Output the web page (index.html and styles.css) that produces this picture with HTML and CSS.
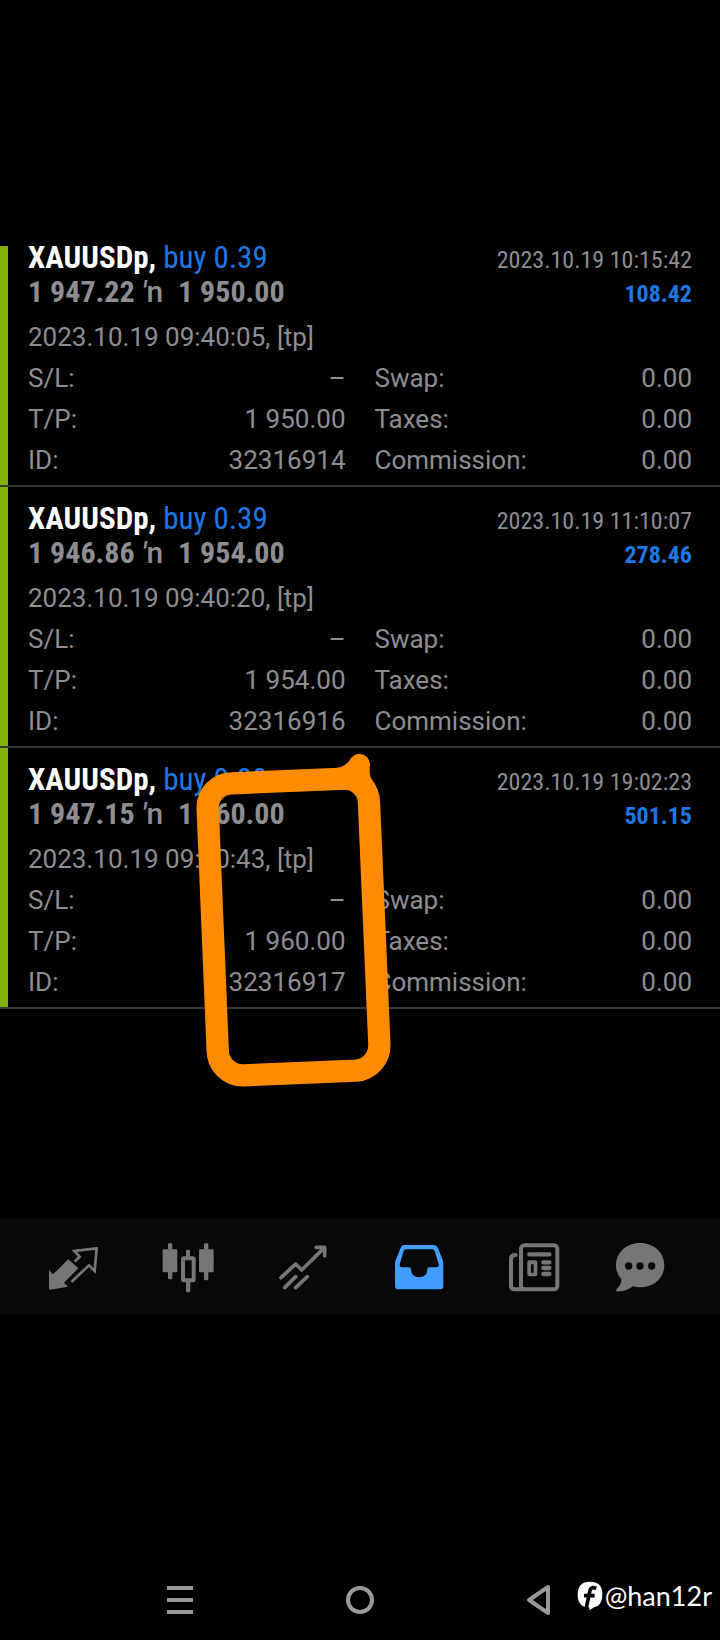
FILE: index.html
```html
<!DOCTYPE html>
<html lang="en">
<head>
    <meta charset="UTF-8">
    <meta name="viewport" content="width=device-width, initial-scale=1">
    <title>History</title>
    <link rel="stylesheet" href="styles.css">
</head>
<body>

<main class="history">
    <article class="deal">
        <div class="row title">
            <h2><b>XAUUSDp,</b> <span class="buy">buy 0.39</span></h2>
            <time>2023.10.19 10:15:42</time>
        </div>
        <div class="row price">
            <p>1 947.22 <span class="to"><i>′</i>n</span> 1 950.00</p>
            <strong class="profit">108.42</strong>
        </div>
        <p class="opened">2023.10.19 09:40:05, [tp]</p>
        <dl class="details">
            <div><dt>S/L:</dt><dd>–</dd></div>
            <div><dt>Swap:</dt><dd>0.00</dd></div>
            <div><dt>T/P:</dt><dd>1 950.00</dd></div>
            <div><dt>Taxes:</dt><dd>0.00</dd></div>
            <div><dt>ID:</dt><dd>32316914</dd></div>
            <div><dt>Commission:</dt><dd>0.00</dd></div>
        </dl>
    </article>
    <article class="deal">
        <div class="row title">
            <h2><b>XAUUSDp,</b> <span class="buy">buy 0.39</span></h2>
            <time>2023.10.19 11:10:07</time>
        </div>
        <div class="row price">
            <p>1 946.86 <span class="to"><i>′</i>n</span> 1 954.00</p>
            <strong class="profit">278.46</strong>
        </div>
        <p class="opened">2023.10.19 09:40:20, [tp]</p>
        <dl class="details">
            <div><dt>S/L:</dt><dd>–</dd></div>
            <div><dt>Swap:</dt><dd>0.00</dd></div>
            <div><dt>T/P:</dt><dd>1 954.00</dd></div>
            <div><dt>Taxes:</dt><dd>0.00</dd></div>
            <div><dt>ID:</dt><dd>32316916</dd></div>
            <div><dt>Commission:</dt><dd>0.00</dd></div>
        </dl>
    </article>
    <article class="deal">
        <div class="row title">
            <h2><b>XAUUSDp,</b> <span class="buy">buy 0.39</span></h2>
            <time>2023.10.19 19:02:23</time>
        </div>
        <div class="row price">
            <p>1 947.15 <span class="to"><i>′</i>n</span> 1 960.00</p>
            <strong class="profit">501.15</strong>
        </div>
        <p class="opened">2023.10.19 09:40:43, [tp]</p>
        <dl class="details">
            <div><dt>S/L:</dt><dd>–</dd></div>
            <div><dt>Swap:</dt><dd>0.00</dd></div>
            <div><dt>T/P:</dt><dd>1 960.00</dd></div>
            <div><dt>Taxes:</dt><dd>0.00</dd></div>
            <div><dt>ID:</dt><dd>32316917</dd></div>
            <div><dt>Commission:</dt><dd>0.00</dd></div>
        </dl>
    </article>
</main>

<!-- hand-drawn marker -->
<svg class="marker" viewBox="0 0 690 1080" aria-hidden="true">
    <path class="stroke" d="M155 130L495 116A73 73 0 0 1 567 188L598 912A76 76 0 0 1 528 992L190 1006A76 76 0 0 1 113 928L83 205A73 73 0 0 1 155 130Z"/>
    <path class="tip" d="M470 84Q494 80 508 62Q520 41 538 41Q566 44 570 72Q567 100 572 112Q588 134 594 155Q560 150 500 130Z"/>
</svg>

<nav class="tabs">
    <a href="#quotes" aria-label="Quotes">
        <svg viewBox="136 86 168 168">
            <path d="M148 180L160 192L206 147L236 174L193 217L205 229L151 238L148 235Z"/>
            <path class="line" d="M225 154L240 139L224 122L291 114L285 182L268 165L215 215"/>
        </svg>
    </a>
    <a href="#charts" aria-label="Charts">
        <svg viewBox="481 86 168 168">
            <rect x="505" y="99" width="13" height="108" rx="4"/>
            <rect x="489" y="117" width="44" height="69" rx="4"/>
            <rect x="613" y="99" width="13" height="111" rx="4"/>
            <rect x="598" y="117" width="44" height="69" rx="4"/>
            <rect x="559" y="118" width="12" height="24" rx="4"/>
            <rect x="559" y="212" width="13" height="34" rx="4"/>
            <rect class="box" x="550" y="144" width="32" height="66" rx="3"/>
        </svg>
    </a>
    <a href="#trade" aria-label="Trade">
        <svg viewBox="106 86 168 168">
            <path class="trend" d="M124 202L168 161L186 179L252 114M229 111H255V136M135 232L168 199M168 232L203 199"/>
        </svg>
    </a>
    <a class="active" href="#history" aria-label="History">
        <svg viewBox="451 86 168 168">
            <path fill-rule="evenodd" d="M491 104H580Q588 104 592 113L605 147Q608 154 608 162V228Q608 237 599 237H472Q463 237 463 228V162Q463 154 466 147L480 113Q483 104 491 104ZM495 117Q491 117 489 122L478 159Q475 171 485 171H506Q511 171 511 176Q511 201 535 201Q560 201 560 176Q560 171 565 171H588Q596 171 594 161L582 122Q580 117 576 117Z"/>
        </svg>
    </a>
    <a href="#news" aria-label="News">
        <svg viewBox="76 86 168 168">
            <rect class="box" x="121" y="105" width="109" height="132" rx="10"/>
            <path class="box" d="M105 134Q91 134 91 145V226Q91 237 104 237H130"/>
            <path class="bars" d="M146 132H206M188 156H206M188 173H206M188 191H206"/>
            <path fill-rule="evenodd" d="M145 150H164Q170 150 170 156V192Q170 198 164 198H145Q140 198 140 192V156Q140 150 145 150ZM151 162V187H159V162Z"/>
        </svg>
    </a>
    <a href="#messages" aria-label="Messages">
        <svg viewBox="393 86 168 168">
            <path d="M477 98C520 98 550 128 550 165C550 202 519 231 477 231Q466 231 456 228Q435 245 406 243Q404 239 408 235Q421 224 421 207Q405 190 405 165C405 128 435 98 477 98Z"/>
            <g class="dots">
                <circle cx="443" cy="167" r="11"/>
                <circle cx="477" cy="167" r="11"/>
                <circle cx="512" cy="167" r="11"/>
            </g>
        </svg>
    </a>
</nav>

<footer class="system">
    <button type="button" aria-label="Recent apps">
        <svg viewBox="0 0 32 32"><path d="M3 4H29M3 16H29M3 28H29"/></svg>
    </button>
    <button type="button" aria-label="Home">
        <svg viewBox="0 0 32 32"><circle cx="16" cy="16" r="12"/></svg>
    </button>
    <button type="button" aria-label="Back">
        <svg viewBox="0 0 32 32"><path d="M5 16L24 3V29Z"/></svg>
    </button>
</footer>

<div class="watermark">
    <svg viewBox="230 70 78 88" aria-hidden="true">
        <path class="badge" d="M269 71Q306 71 306 108Q306 143 283 147L267 157V148Q232 148 232 110Q232 71 269 71Z"/>
        <path class="mark" d="M288 91Q270 84 268 101L258 149M251 113H283"/>
    </svg>
    <span>@han12r</span>
</div>

</body>
</html>
```
FILE: styles.css
```css
* {
    margin: 0;
    padding: 0;
    box-sizing: border-box;
}

body {
    position: relative;
    display: flex;
    flex-direction: column;
    min-height: 100vh;
    padding-top: 246px;
    background: #000;
    color: #8e8e92;
    font: 26px/41px Roboto, sans-serif;
}

.history {
    flex: 1;
}

.deal {
    position: relative;
    padding: 15px 28px 4px;
    border-bottom: 2px solid #38383a;
}

/* green stripe on the left edge */
.deal::before {
    content: "";
    position: absolute;
    top: 0;
    bottom: 0;
    left: 0;
    width: 8px;
    background: #80b306;
}

.row {
    display: flex;
    align-items: baseline;
    justify-content: space-between;
    height: 34px;
    font-family: "Roboto Condensed", "Liberation Sans Narrow", sans-serif;
    line-height: 34px;
}

/* the first deal sits right against the top of the list */
.deal:first-child {
    padding-top: 0;
}

.deal:first-child .title {
    height: 29px;
    line-height: 24px;
}

.title h2 {
    font-size: 31px;
    font-weight: 400;
}

.title b {
    color: #fff;
}

.title time,
.profit {
    font-size: 24px;
}

.buy,
.profit {
    color: #1e78e6;
}

.price p {
    font-size: 30px;
    font-weight: 700;
}

.price .to {
    margin-right: 8px;
    font-family: Roboto, sans-serif;
    font-weight: 500;
    line-height: 1;
}

.opened {
    margin-top: 8px;
}

.details {
    display: grid;
    grid-template-columns: 1fr 1fr;
    column-gap: 29px;
}

.details div {
    display: flex;
    justify-content: space-between;
}

.marker {
    position: absolute;
    top: 740px;
    left: 180px;
    width: 230px;
    height: 360px;
    pointer-events: none;
}

.marker .stroke {
    fill: none;
    stroke: #ff8c00;
    stroke-width: 67;
}

.marker .tip {
    fill: #ff8c00;
}

.tabs {
    display: grid;
    grid-template-columns: repeat(5, 6fr) 5fr;
    align-items: center;
    height: 97px;
    padding: 0 32px 0 15px;
    background: #080808;
}

.tabs a {
    display: flex;
    justify-content: center;
    color: #767676;
}

.tabs .active {
    color: #429dff;
}

.tabs svg {
    width: 56px;
    height: 56px;
    fill: currentColor;
}

.tabs .line,
.tabs .box,
.tabs .trend,
.tabs .bars {
    fill: none;
    stroke: currentColor;
}

.tabs .line {
    stroke-width: 8;
}

.tabs .box {
    stroke-width: 12;
    stroke-linecap: round;
}

.tabs .trend {
    stroke-width: 11;
    stroke-linecap: round;
    stroke-linejoin: round;
}

.tabs .bars {
    stroke-width: 13;
    stroke-linecap: round;
}

.tabs .dots {
    fill: #080808;
}

.system {
    display: grid;
    grid-template-columns: repeat(3, 1fr);
    align-items: end;
    height: 325px;
    padding: 0 12.5% 24px;
}

.system button {
    display: flex;
    justify-content: center;
    border: 0;
    background: none;
}

.system svg {
    width: 32px;
    height: 32px;
    fill: none;
    stroke: #999;
    stroke-width: 4;
    stroke-linejoin: round;
}

.watermark {
    position: absolute;
    right: 8px;
    bottom: 26px;
    display: flex;
    align-items: center;
    gap: 2px;
    color: #fff;
    font: 27px/36px Lato, sans-serif;
}

.watermark svg {
    width: 26px;
    height: 30px;
}

.watermark .badge {
    fill: #fff;
}

.watermark .mark {
    fill: none;
    stroke: #000;
    stroke-width: 11;
}
```
